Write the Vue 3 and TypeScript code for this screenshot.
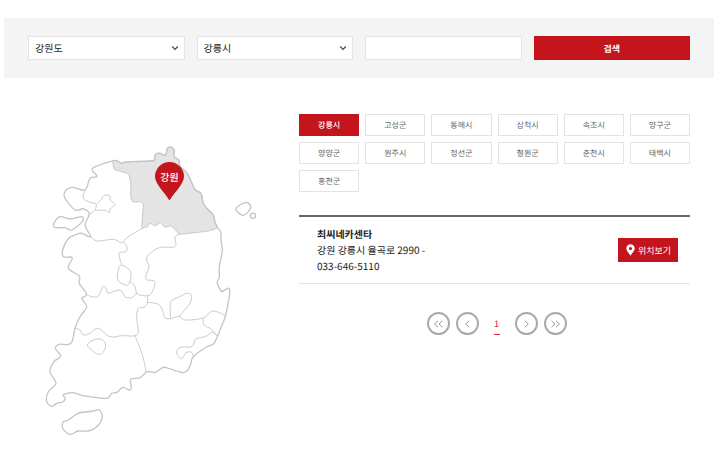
<script setup lang="ts">
import { ref } from 'vue'

type Point = [number, number]

const province = ref('강원도')
const city = ref('강릉시')
const keyword = ref('')

const cities: string[] = [
  '강릉시', '고성군', '동해시', '삼척시', '속초시', '양구군',
  '양양군', '원주시', '정선군', '철원군', '춘천시', '태백시',
  '홍천군',
]

function parse(list: string): Point[] {
  return list.trim().split(/\s+/).map((pair) => pair.split(',').map(Number) as Point)
}

// Catmull-Rom spline through the listed points, written as cubic segments.
function curve(list: string, closed = false): string {
  const pts = parse(list)
  const n = pts.length
  const at = (i: number): Point => (closed ? pts[(i + n) % n] : pts[Math.max(0, Math.min(n - 1, i))])
  let d = `M${pts[0][0]} ${pts[0][1]}`
  for (let i = 0; i < (closed ? n : n - 1); i++) {
    const [a, b, c, e] = [at(i - 1), at(i), at(i + 1), at(i + 2)]
    const x1 = b[0] + (c[0] - a[0]) / 6
    const y1 = b[1] + (c[1] - a[1]) / 6
    const x2 = c[0] - (e[0] - b[0]) / 6
    const y2 = c[1] - (e[1] - b[1]) / 6
    d += `C${x1.toFixed(1)} ${y1.toFixed(1)} ${x2.toFixed(1)} ${y2.toFixed(1)} ${c[0]} ${c[1]}`
  }
  return closed ? d + 'Z' : d
}

const northCoast = '113.3,160.7 118,161.3 121.7,163.3 126,162 136,161.5 150,161 154.5,160 155,155.5 157,153.7 160.7,153.3 163,155 166,154.2 167.3,148.5 169,147.3 172,147.3 174,150 174.3,156.7 179,160 180,166 186.7,172.7 191,181 195,189.5 201,193.5 203.3,203.3 208,209.5 213.3,215 215,222 217.3,227.5'

const gangwon = curve(northCoast + ' 210,230.5 203.3,231.7 191,233 180,234 175,229.3 170.7,226 167,226.8 164,226.7 160.7,222.7 155,225.7 150,223.3 147,227.3 145,226.8 142,228.3 142.5,216 143.3,205 140,201.7 131.7,200.5 130.7,183.3 128.3,174.3 121.7,171.7 115,169.8 113.5,166', true)

const coasts: string[] = [
  curve(northCoast + ' 220.7,231.7 221,240 222.3,251 219.3,266.7 219.3,276.7 217.3,283.3 221.7,291.5 225,289.7 229.8,290.3 225.7,315 222,325 217.3,336.7 213.3,344.3 206.7,346.7 193.3,356.7 191,363 188.3,369.5 183.3,372.7 176.7,371 165,367.3 160,369.3 155,372.5 150,371.7 146,372.3 140,377.7 130.7,379.3 131.5,388 129,390 122.7,387.3 117.3,392.3 111.7,393.3 107.3,398.3 95,397.3 81.7,395.3 72.7,392.7 63.3,394.7 65.3,398.3 62.7,402 56.7,403.3 51.7,406.3 46.7,401.7 48.3,391.7 56,383.3 50,371.7 54,361.7 60.7,356 55.3,348.3 59.3,344.3 71,343.3 75,328.3 80,316.7 86.7,306.7 81.7,298.3 86.7,294.3 79.3,283.3 79.3,276 68.3,268.3 72.3,257.8 63.5,256.7 62.7,250 68,239 75,235 81.7,233.3 90.7,236.7 85,225 89.3,214 83.3,208.8 75,210 65,198.3 65,191.7 71.7,187.3 85,190 90,178.3 97,176.3 92.7,168.3', true),
  curve('55,227.5 54,223.3 60,216.7 70,219 81.7,216.7 82.3,221.7 71.7,230 65,227.7', true),
  curve('63.3,421.7 68.3,420 78.3,413.3 93.3,411 99.3,410 102.3,417.3 96.7,426.7 88.3,431 78.3,431 70,434.3 63.3,429.3 62.3,425', true),
  curve('236,208.3 240,205 246.7,202.3 250.7,206.7 248.3,211.7 243.3,215.3 237.5,212', true),
]

const borders: string[] = [
  curve('85,190 83.3,198.3 90,202.3 96,204 95,210 89.3,214'),
  curve('96.7,204 101.7,199.3 103.3,196 109,195.3 110.7,200.7 115,204.3 110,209 109.3,212.7 105,210.3 95.5,210.3'),
  curve('90.7,236.7 97.3,241 113.3,239.3 121.7,242.7 128.3,236.7 142,228.3'),
  curve('123.3,242 126.7,246 126,251.7 119,253.3 121.7,265'),
  curve('121.7,265 118.3,270 117.7,280 125,285 129.3,283.3 130.7,271.7', true),
  curve('130,280.7 135,286.7 136.7,293 143,295.7 150.7,294.3 155,281.7 147.3,280 145.7,276.7 149,266.7 146.7,260.7 148.3,255 159.3,247.7 175,246.5 175,237 180,234'),
  curve('86.7,294.3 91,296.5 98.3,296 103.3,286 106.7,290 108.3,293.3 120,290 125,296.7 131.7,297.7 136.7,293'),
  curve('147.5,295.3 147.5,303 144,307.5 138.3,308.3 136.7,318.3 138.3,331 135,335.7 121.7,335.7 110,336.7 98.3,328.3 90,333.3 83,335 80,330 75,328.3'),
  curve('135,335.7 140,348.3 143.3,358.3 146,372'),
  curve('87.3,345 93.3,340 101.7,339.3 105.7,345 102.7,352.7 97.3,354 91.7,350', true),
  curve('147.3,302.3 158.3,304.3 162.7,310.7 164.7,317.7 170.7,318.7 179.3,316.3 185,320 203.3,318 212.7,311 225,315.3'),
  curve('170.7,318.7 170.7,302 179,297 186.7,293.3 191.3,295 190,303.3 179.3,316.3'),
  curve('203.3,318 204,325 211.7,329.3 217.3,336.7'),
  curve('217,336 212.7,332.3 205,336.7 196,339 191.7,346.7 180,347.3 176.7,353.3 181.7,358.7 186,352.7 191.7,352.3 193.3,356.7'),
]
</script>

<template>
  <main class="page">
    <form class="search" @submit.prevent>
      <div class="select">
        <select v-model="province" aria-label="시/도">
          <option>강원도</option>
        </select>
        <svg class="chevron" viewBox="0 0 8 6" aria-hidden="true"><path d="M1.200 1.500 4 4.300 6.800 1.500" /></svg>
      </div>
      <div class="select">
        <select v-model="city" aria-label="시/군/구">
          <option v-for="name in cities" :key="name">{{ name }}</option>
        </select>
        <svg class="chevron" viewBox="0 0 8 6" aria-hidden="true"><path d="M1.200 1.500 4 4.300 6.800 1.500" /></svg>
      </div>
      <input v-model="keyword" type="text" aria-label="검색어" />
      <button type="submit">검색</button>
    </form>

    <div class="content">
      <svg class="map" viewBox="40 140 220 300" role="img" aria-label="지역 지도">
        <path class="land" :d="coasts[0]" />
        <path class="active" :d="gangwon" />
        <path v-for="d in borders" :key="d" class="border" :d="d" />
        <path v-for="d in coasts" :key="d" class="coast" :d="d" />
        <circle class="coast" cx="253" cy="215.7" r="2.6" />
        <path class="pin" d="M169.500 200.500C166 194 155 184 155 176.500A14.500 14.500 0 0 1 184 176.500C184 184 173 194 169.500 200.500Z" />
        <text class="pin-label" x="169.500" y="181">강원</text>
      </svg>

      <section class="results">
        <div class="cities">
          <button
            v-for="name in cities"
            :key="name"
            type="button"
            :class="{ selected: name === city }"
            @click="city = name"
          >{{ name }}</button>
        </div>

        <ul class="shops">
          <li>
            <div class="shop">
              <h2>최씨네카센타</h2>
              <p>강원 강릉시 율곡로 2990 -</p>
              <p>033-646-5110</p>
            </div>
            <button type="button" class="locate">
              <svg viewBox="0 0 9 12" aria-hidden="true">
                <path fill-rule="evenodd" d="M4.500 .3A4.200 4.200 0 0 0 .3 4.500C.3 7 3 9.200 4.500 11.700 6 9.200 8.700 7 8.700 4.500A4.200 4.200 0 0 0 4.500 .3ZM4.500 2.900A1.600 1.600 0 1 1 4.500 6.100 1.600 1.600 0 0 1 4.500 2.900Z" />
              </svg>
              위치보기
            </button>
          </li>
        </ul>

        <nav class="pager" aria-label="페이지">
          <a href="#" aria-label="처음"><svg viewBox="0 0 11 8"><path d="M5 .8 1.500 4 5 7.200M9.500 .8 6 4 9.500 7.200" /></svg></a>
          <a href="#" aria-label="이전"><svg viewBox="0 0 11 8"><path d="M7.200 .8 3.700 4 7.200 7.200" /></svg></a>
          <a href="#" class="current" aria-current="page">1</a>
          <a href="#" aria-label="다음"><svg viewBox="0 0 11 8"><path d="M3.800 .8 7.300 4 3.800 7.200" /></svg></a>
          <a href="#" aria-label="마지막"><svg viewBox="0 0 11 8"><path d="M1.500 .8 5 4 1.500 7.200M6 .8 9.500 4 6 7.200" /></svg></a>
        </nav>
      </section>
    </div>
  </main>
</template>

<style>
body {
  background: #fff;
}
</style>

<style scoped>
.page,
.page button,
.page input,
.page select {
  font-family: "Noto Sans CJK KR", "Noto Sans", sans-serif;
  text-rendering: geometricPrecision;
}

.page {
  padding: 18px 6px 18px 4px;
  color: #222;
  font-size: 10px;
}

.page * {
  box-sizing: border-box;
}

button {
  margin: 0;
  padding: 0;
  border: 0;
  cursor: pointer;
}

.search {
  display: grid;
  grid-template-columns: repeat(4, 1fr);
  gap: 12px;
  padding: 18px 24px;
  background: #f4f4f4;
}

.select {
  display: grid;
  align-items: center;
}

.select select,
.search input {
  width: 100%;
  height: 24px;
  margin: 0;
  padding: 0 6px;
  border: 1px solid #e3e3e3;
  border-radius: 0;
  background: #fff;
  color: #222;
  font-size: 10px;
}

.select select {
  grid-area: 1 / 1;
  padding-bottom: 2px;
  appearance: none;
}

.chevron {
  grid-area: 1 / 1;
  justify-self: end;
  width: 8px;
  height: 6px;
  margin-right: 6px;
  fill: none;
  stroke: #444;
  stroke-width: 1.2;
  pointer-events: none;
}

.search button {
  height: 24px;
  background: #c4151c;
  color: #fff;
  font-size: 9px;
  font-weight: 700;
}

.content {
  display: grid;
  grid-template-columns: 220px 1fr;
  gap: 39px;
  padding: 36px 24px 0 36px;
}

.map {
  width: 100%;
  margin-top: 26px;
}

.land {
  fill: #fff;
}

.active {
  fill: #e4e4e4;
  stroke: #c8c8c8;
  stroke-width: 1;
}

.coast {
  fill: none;
  stroke: #c4c4c4;
  stroke-width: 1.3;
}

.border {
  fill: none;
  stroke: #cbcbcb;
  stroke-width: 1;
}

.pin {
  fill: #c4151c;
}

.pin-label {
  fill: #fff;
  font-size: 10px;
  font-weight: 500;
  text-anchor: middle;
}

.cities {
  display: grid;
  grid-template-columns: repeat(6, 1fr);
  gap: 6px;
}

.cities button {
  height: 22px;
  border: 1px solid #e3e3e3;
  background: #fff;
  color: #666;
  font-size: 8px;
}

.cities .selected {
  border-color: #c4151c;
  background: #c4151c;
  color: #fff;
  font-weight: 500;
}

.shops {
  margin: 23px 0 0;
  padding: 0;
  border-top: 2px solid #666;
  list-style: none;
}

.shops li {
  display: flex;
  align-items: center;
  justify-content: space-between;
  padding: 9px 12px 9px 18px;
  border-bottom: 1px solid #e3e3e3;
}

.shop h2,
.shop p {
  margin: 0;
  font-size: 10px;
  line-height: 16px;
}

.shop h2 {
  font-weight: 700;
}

.locate {
  display: flex;
  align-items: center;
  gap: 3px;
  height: 24px;
  padding: 0 7px 0 8px;
  background: #c4151c;
  color: #fff;
  font-size: 9px;
}

.locate svg {
  width: 9px;
  height: 12px;
  fill: #fff;
}

.pager {
  display: flex;
  justify-content: center;
  gap: 6px;
  margin-top: 28px;
  padding-left: 4px;
}

.pager a {
  display: grid;
  place-items: center;
  width: 23px;
  height: 23px;
  border: 2px solid #aaa;
  border-radius: 50%;
  color: #e0262c;
  text-decoration: none;
}

.pager svg {
  width: 11px;
  height: 8px;
  fill: none;
  stroke: #999;
  stroke-width: 1;
}

.pager .current {
  width: 6px;
  margin: 0 9px;
  border: 0;
  border-bottom: 1px solid #e0262c;
  border-radius: 0;
  font-size: 9px;
}
</style>
